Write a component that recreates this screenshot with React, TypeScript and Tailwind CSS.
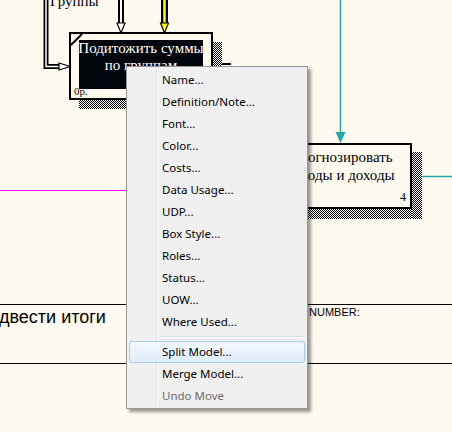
import React from "react";

const items = [
  "Name...",
  "Definition/Note...",
  "Font...",
  "Color...",
  "Costs...",
  "Data Usage...",
  "UDP...",
  "Box Style...",
  "Roles...",
  "Status...",
  "UOW...",
  "Where Used...",
];

const dither =
  "bg-[repeating-conic-gradient(#000_0%_25%,#fff_0%_50%)] bg-[length:2px_2px]";

const MenuItem = ({
  label,
  active,
  disabled,
}: {
  label: string;
  active?: boolean;
  disabled?: boolean;
}) => (
  <div
    className={
      "flex h-[22px] items-center pl-[32px] whitespace-nowrap rounded-[3px] border " +
      (active
        ? "border-[#a8cdf5] bg-gradient-to-b from-[#f3f8fe] to-[#e1ecfa]"
        : "border-transparent") +
      (disabled ? " text-[#6d6d6d]" : " text-black")
    }
  >
    {label}
  </div>
);

const ContextMenu = () => (
  <div className="absolute left-[126px] top-[66px] w-[182px] border border-[#979797] bg-[#f0f0f0] px-[2px] pt-[2px] pb-[1px] font-['Noto_Sans',sans-serif] text-[11.5px] shadow-[3px_3px_3px_rgba(0,0,0,0.4)]">
    <div className="absolute left-[29px] top-[2px] bottom-[2px] w-[1px] bg-[#e2e3e3]" />
    <div className="absolute left-[30px] top-[2px] bottom-[2px] w-[1px] bg-white" />
    <div className="relative flex flex-col">
      {items.map((label) => (
        <MenuItem key={label} label={label} />
      ))}
      <div className="ml-[30px] h-[8px] pt-[3px]">
        <div className="h-[1px] bg-[#dcdcdc]" />
        <div className="h-[1px] bg-white" />
      </div>
      <MenuItem label="Split Model..." active />
      <MenuItem label="Merge Model..." />
      <MenuItem label="Undo Move" disabled />
    </div>
  </div>
);

const Lines = () => (
  <svg className="absolute inset-0" width="452" height="432" viewBox="0 0 452 432">
    {/* left double arrow */}
    <path d="M46 0 V66.5 H62" fill="none" stroke="#000" strokeWidth="5" />
    <path d="M46 0 V66.5 H62" fill="none" stroke="#fff" strokeWidth="1.5" />
    <path d="M59 63 L70 66.5 L59 70 Z" fill="#fff" stroke="#000" strokeWidth="1.2" />
    {/* top double arrows */}
    <path d="M121 0 V25" stroke="#000" strokeWidth="6" />
    <path d="M121 0 V25" stroke="#fff" strokeWidth="2" />
    <path d="M117 23 L125 23 L121 33 Z" fill="#fff" stroke="#000" strokeWidth="1.2" />
    <path d="M164.5 0 V25" stroke="#000" strokeWidth="7" />
    <path d="M164.5 0 V25" stroke="#ffff00" strokeWidth="2.5" />
    <path d="M160.5 23 L168.5 23 L164.5 33 Z" fill="#ffff00" stroke="#000" strokeWidth="1.2" />
    {/* outgoing stub */}
    <path d="M212 64 H231" stroke="#000" strokeWidth="2" />
    {/* cyan */}
    <path d="M340.5 0 V134" stroke="#20a8a8" strokeWidth="1.5" />
    <path d="M335.5 132 L345.5 132 L340.5 143 Z" fill="#20a8a8" />
    <path d="M412 176.5 H452" stroke="#20a8a8" strokeWidth="1.5" />
    {/* magenta */}
    <path d="M0 190.5 H130" stroke="#ff00ff" strokeWidth="1" />
    {/* frame lines */}
    <path d="M0 304.5 H452" stroke="#000" strokeWidth="1" />
    <path d="M0 363.5 H452" stroke="#000" strokeWidth="1" />
  </svg>
);

export default function App() {
  return (
    <div className="relative h-[432px] w-[452px] overflow-hidden bg-[#fffaef] font-['Liberation_Serif',serif]">
      <Lines />

      <div className="absolute left-[50px] top-[-6px] text-[15px] leading-[15px] text-black">
        Группы
      </div>

      {/* box 1 */}
      <div className={"absolute left-[79px] top-[100px] h-[9px] w-[144px] " + dither} />
      <div className={"absolute left-[212px] top-[42px] h-[67px] w-[10px] " + dither} />
      <div className="absolute left-[69px] top-[32px] h-[68px] w-[144px] border-2 border-black bg-[#fffaef]">
        <svg className="absolute left-0 top-0" width="12" height="12">
          <path d="M0 11 L11 0" stroke="#000" strokeWidth="2" />
        </svg>
        <div className="absolute left-[8px] top-[6px] h-[49px] w-[124px] bg-[#03050c]" />
        <div className="absolute left-[6px] right-[6px] top-[6px] flex flex-col items-center text-[15px] leading-[17px] text-white">
          <div>Подитожить суммы</div>
          <div>по группам</div>
        </div>
        <div className="absolute left-[3px] top-[51px] text-[11px] leading-[12px] text-[#1a1000]">
          0р.
        </div>
      </div>

      {/* box 2 */}
      <div className={"absolute left-[270px] top-[209px] h-[10px] w-[152px] " + dither} />
      <div className={"absolute left-[412px] top-[152px] h-[67px] w-[10px] " + dither} />
      <div className="absolute left-[262px] top-[143px] h-[66px] w-[150px] border-2 border-black bg-[#fffaef]">
        <div className="absolute left-0 right-[-1px] top-[3px] flex flex-col items-center text-[15px] leading-[18px] text-black">
          <div>Спрогнозировать</div>
          <div>расходы и доходы</div>
        </div>
        <div className="absolute right-[4px] bottom-[4px] text-[12px] leading-[12px] text-black">
          4
        </div>
      </div>

      <div className="absolute left-[-1px] top-[307px] font-['Liberation_Sans',sans-serif] text-[18px] leading-[20px] text-black">
        двести итоги
      </div>
      <div className="absolute left-[309px] top-[306px] font-['Liberation_Sans',sans-serif] text-[11px] leading-[13px] text-black">
        NUMBER:
      </div>

      <ContextMenu />
    </div>
  );
}
